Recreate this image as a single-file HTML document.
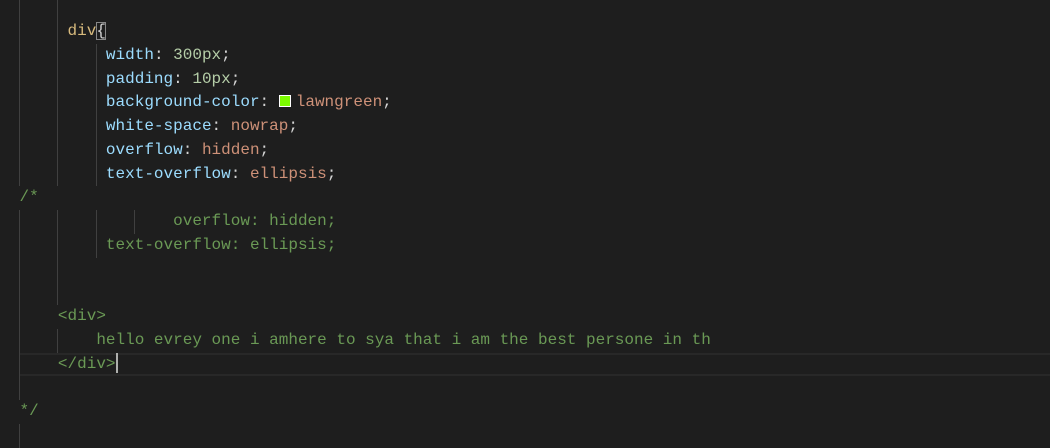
<!DOCTYPE html>
<html><head><meta charset="utf-8"><style>
body{margin:0;background:#1e1e1e;width:1050px;height:437px;overflow:hidden;position:relative;font-family:"Liberation Mono",monospace;font-size:16px;}
.l{position:absolute;left:0;width:1050px;height:23.75px;line-height:23.75px;white-space:pre;}
.t{position:absolute;left:19.5px;top:0;}
.g{position:absolute;top:0;width:1px;height:100%;background:#404040;}
.p{color:#9cdcfe}.n{color:#b5cea8}.s{color:#ce9178}.sel{color:#d7ba7d}.c{color:#6a9955}.w{color:#d4d4d4}
.cur{border-top:2px solid #282828;border-bottom:2px solid #282828;box-sizing:border-box;left:20px;width:1030px;}
</style></head><body>
<div class="l" style="top:-3.75px"><i class="g" style="left:19px"></i><i class="g" style="left:57px"></i></div>
<div class="l" style="top:20px"><i class="g" style="left:19px"></i><i class="g" style="left:57px"></i><span class="t">     <span class="sel">div</span><span class="w" style="outline:1px solid #888;outline-offset:-1px">{</span></span></div>
<div class="l" style="top:43.75px"><i class="g" style="left:19px"></i><i class="g" style="left:57px"></i><i class="g" style="left:96px"></i><span class="t">         <span class="p">width</span><span class="w">: </span><span class="n">300px</span><span class="w">;</span></span></div>
<div class="l" style="top:67.5px"><i class="g" style="left:19px"></i><i class="g" style="left:57px"></i><i class="g" style="left:96px"></i><span class="t">         <span class="p">padding</span><span class="w">: </span><span class="n">10px</span><span class="w">;</span></span></div>
<div class="l" style="top:91.25px"><i class="g" style="left:19px"></i><i class="g" style="left:57px"></i><i class="g" style="left:96px"></i><span class="t">         <span class="p">background-color</span><span class="w">: </span><span style="display:inline-block;width:10px;height:10px;background:#7cfc00;border:1px solid #fff;vertical-align:-1px;margin-right:5px"></span><span class="s">lawngreen</span><span class="w">;</span></span></div>
<div class="l" style="top:115px"><i class="g" style="left:19px"></i><i class="g" style="left:57px"></i><i class="g" style="left:96px"></i><span class="t">         <span class="p">white-space</span><span class="w">: </span><span class="s">nowrap</span><span class="w">;</span></span></div>
<div class="l" style="top:138.75px"><i class="g" style="left:19px"></i><i class="g" style="left:57px"></i><i class="g" style="left:96px"></i><span class="t">         <span class="p">overflow</span><span class="w">: </span><span class="s">hidden</span><span class="w">;</span></span></div>
<div class="l" style="top:162.5px"><i class="g" style="left:19px"></i><i class="g" style="left:57px"></i><i class="g" style="left:96px"></i><span class="t">         <span class="p">text-overflow</span><span class="w">: </span><span class="s">ellipsis</span><span class="w">;</span></span></div>
<div class="l" style="top:186.25px"><span class="t c">/*</span></div>
<div class="l" style="top:210px"><i class="g" style="left:19px"></i><i class="g" style="left:57px"></i><i class="g" style="left:96px"></i><i class="g" style="left:134px"></i><span class="t c">                overflow: hidden;</span></div>
<div class="l" style="top:233.75px"><i class="g" style="left:19px"></i><i class="g" style="left:57px"></i><i class="g" style="left:96px"></i><span class="t c">         text-overflow: ellipsis;</span></div>
<div class="l" style="top:257.5px"><i class="g" style="left:19px"></i><i class="g" style="left:57px"></i></div>
<div class="l" style="top:281.25px"><i class="g" style="left:19px"></i><i class="g" style="left:57px"></i></div>
<div class="l" style="top:305px"><i class="g" style="left:19px"></i><span class="t c">    &lt;div&gt;</span></div>
<div class="l" style="top:328.75px"><i class="g" style="left:19px"></i><i class="g" style="left:57px"></i><span class="t c">        hello evrey one i amhere to sya that i am the best persone in th</span></div>
<div class="l cur" style="top:352.5px"></div>
<div class="l" style="top:352.5px"><i class="g" style="left:19px"></i><span class="t c">    &lt;/div&gt;<span style="display:inline-block;width:2px;height:20px;background:#aeafad;vertical-align:-5px"></span></span></div>
<div class="l" style="top:376.25px"><i class="g" style="left:19px"></i></div>
<div class="l" style="top:400px"><span class="t c">*/</span></div>
<div class="l" style="top:423.75px"><i class="g" style="left:19px"></i></div>
</body></html>
